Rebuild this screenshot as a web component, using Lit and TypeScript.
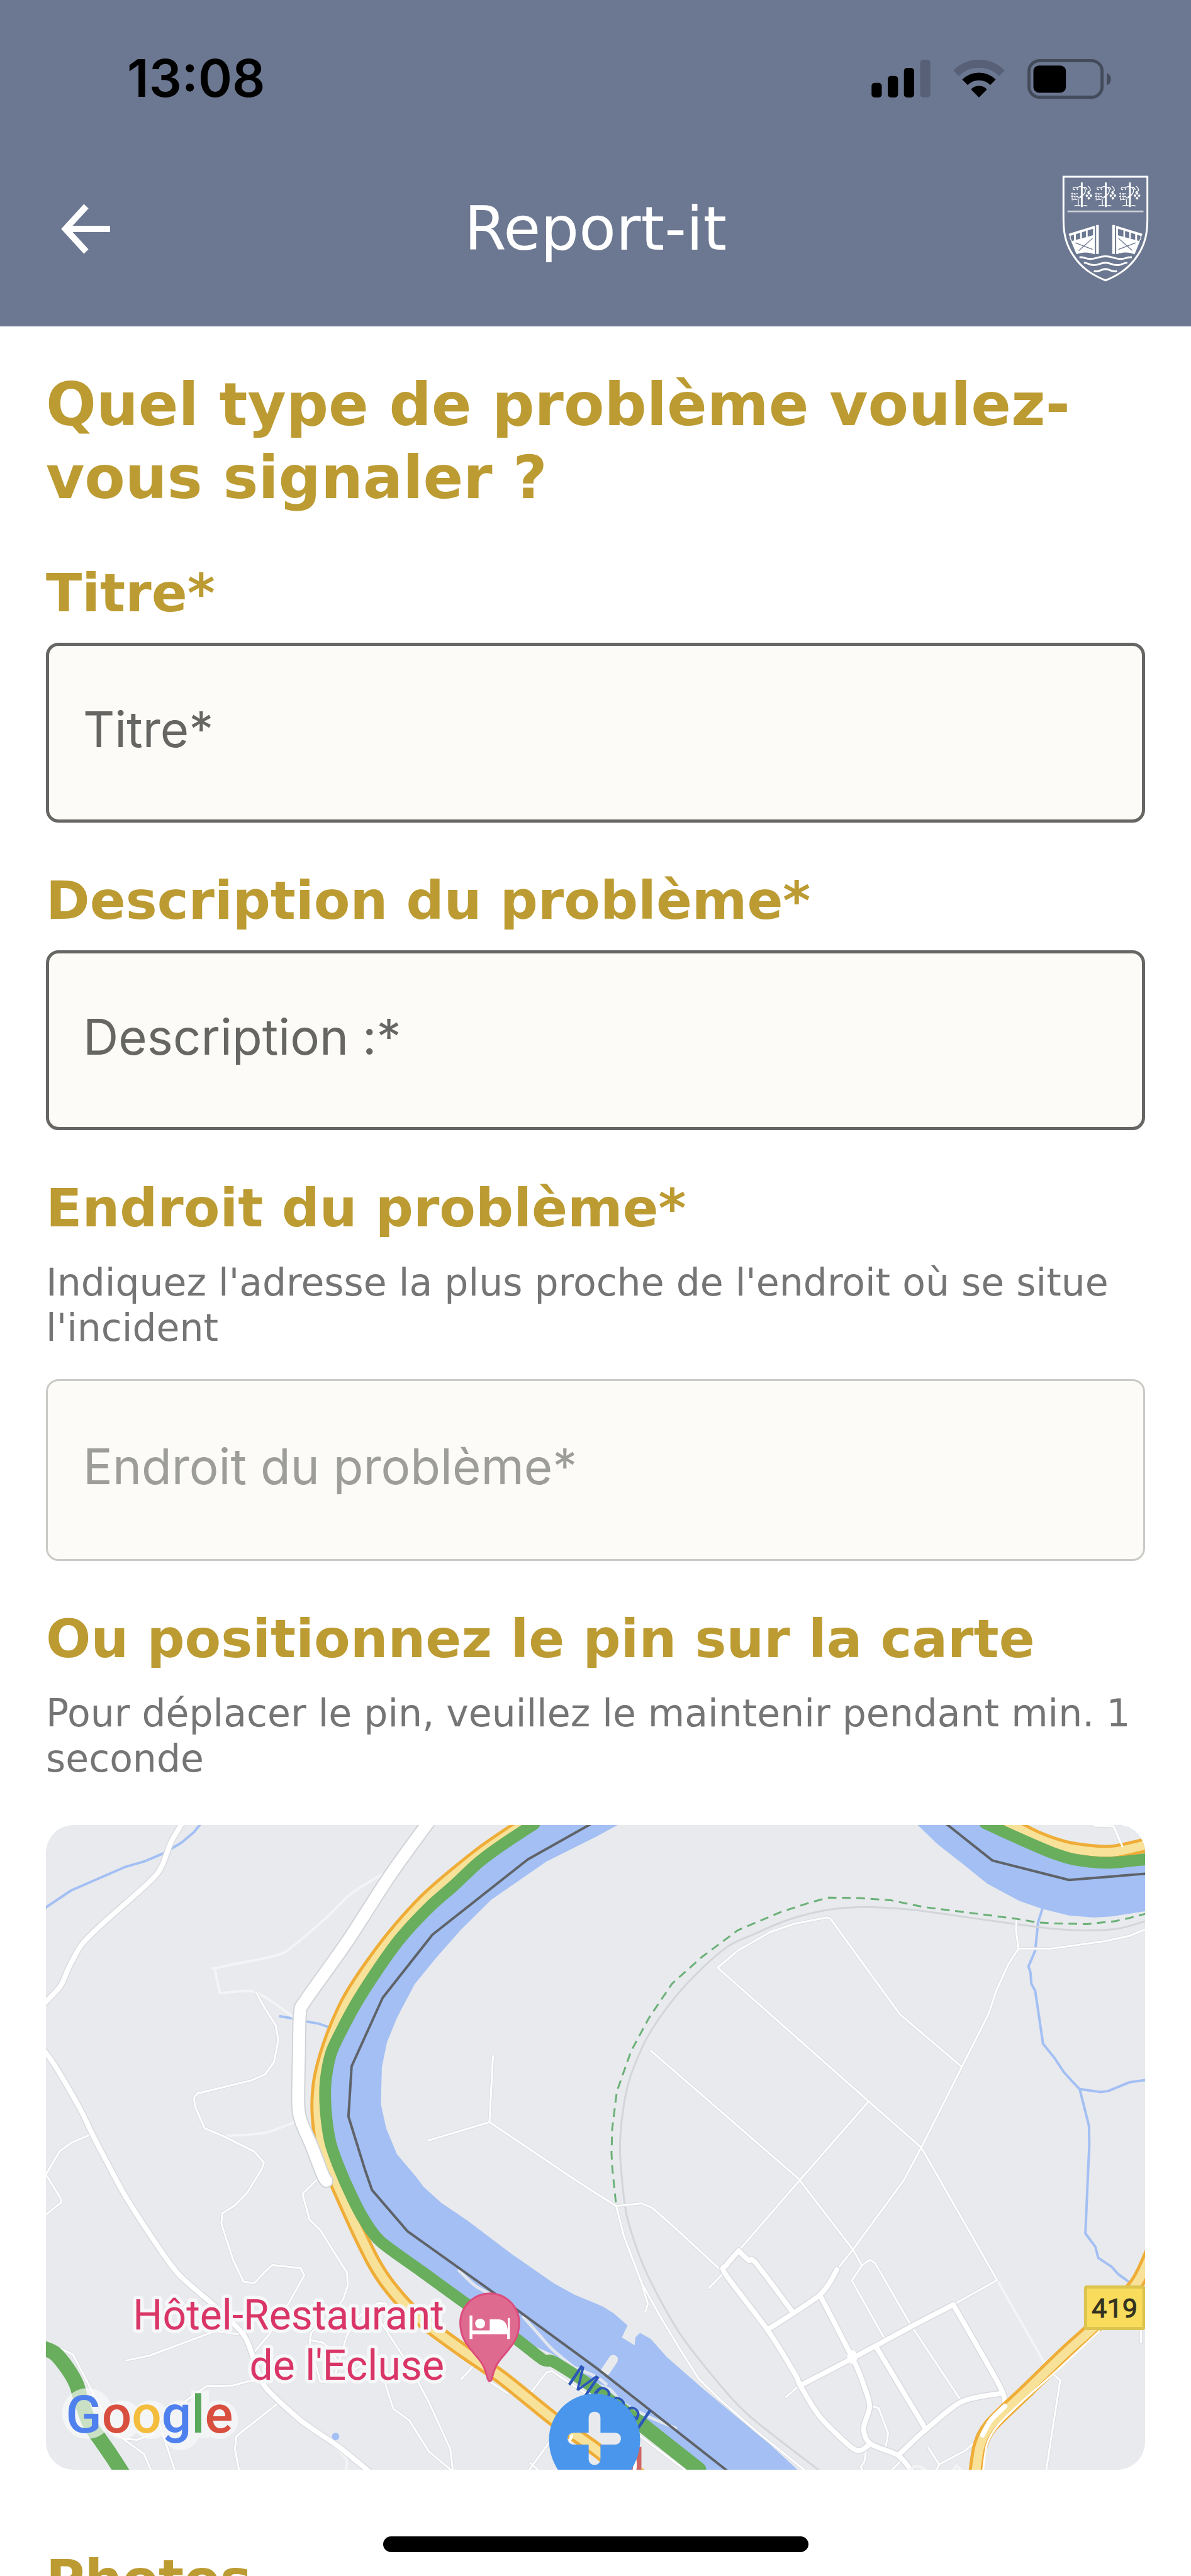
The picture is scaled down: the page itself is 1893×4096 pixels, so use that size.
import { LitElement, html, svg, css } from "lit";
import { customElement, property, state } from "lit/decorators.js";

/* ---------- map geometry ---------- */

// Survey sheets: origin x, origin y, x scale, y scale. Points in the way
// strings below are given in sheet units, after the letter of their sheet.
const SHEETS: Record<string, [number, number, number, number]> = {
  a: [60, 2920, 0.574, 0.3954],
  b: [960, 2920, 0.574, 0.3954],
  c: [60, 3500, 0.574, 0.4177],
  d: [960, 3500, 0.574, 0.4177],
};

type Point = [number, number];

function points(way: string): Point[] {
  let sheet = SHEETS.a;
  const out: Point[] = [];
  for (const token of way.trim().split(/\s+/)) {
    if (SHEETS[token]) {
      sheet = SHEETS[token];
      continue;
    }
    const [x, y] = token.split(",").map(Number);
    out.push([sheet[0] + x * sheet[2], sheet[1] + y * sheet[3]]);
  }
  return out;
}

const fmt = (n: number) => n.toFixed(1);

function straight(way: string): string {
  return "M" + points(way).map(([x, y]) => `${fmt(x)} ${fmt(y)}`).join("L");
}

function curved(way: string): string {
  const p = points(way);
  let d = `M${fmt(p[0][0])} ${fmt(p[0][1])}`;
  for (let i = 0; i < p.length - 1; i++) {
    const p0 = p[Math.max(0, i - 1)];
    const p1 = p[i];
    const p2 = p[i + 1];
    const p3 = p[Math.min(p.length - 1, i + 2)];
    const k = 7;
    d += `C${fmt(p1[0] + (p2[0] - p0[0]) / k)} ${fmt(p1[1] + (p2[1] - p0[1]) / k)} ${fmt(p2[0] - (p3[0] - p1[0]) / k)} ${fmt(p2[1] - (p3[1] - p1[1]) / k)} ${fmt(p2[0])} ${fmt(p2[1])}`;
  }
  return d;
}

const WATER = [
  "b 66,60 0,112 a 1430,212 1275,368 1190,490 1120,605 1060,712 1010,850 982,950 968,1050 965,1200 980,1300 1010,1405 1065,1500 c 1085,68 1135,130 1210,200 1330,325 1450,440 1510,485 1568,518 d 20,530 50,555 90,603 74,650 110,680 112,650 125,632 155,655 200,725 300,845 400,960 480,1050 575,1170 300,1170 150,985 0,840 c 1450,715 1340,650 1200,500 985,290 920,190 850,0 a 830,1350 810,1200 815,1050 840,950 900,780 1000,560 1120,370 1270,190 1400,60",
  "b 903,60 960,140 1030,220 1100,302 1190,372 1255,405 1330,432 1400,440 1450,436 1550,413 1550,60",
];
const INLAND = "b 1120,60 1200,115 1290,170 1350,195 1440,205 1550,190 1550,60";

const STREAMS = [
  "a 20,403 95,330 245,235 300,212 355,178 405,135 440,92 458,60",
  "a 682,843 722,853",
  "a 758,865 790,873 820,888",
  "b 1255,405 1243,460 1235,575 1216,640 1222,665 1224,710 1235,740 1257,955 1290,1015 1315,1070 1340,1110 1360,1140 1386,1290 1387,1370 1384,1460 d 1376,248 1404,300 1412,342 1450,377 1468,405 1500,437",
  "b 1360,1140 1418,1152 1440,1148 1500,1112 1550,1102",
];

const RAIL =
  "b 1550,453 1470,485 1380,493 1280,485 1120,455 1000,430 900,410 800,399 720,399 640,412 540,450 450,505 370,560 280,675 210,790 145,930 100,1080 80,1200 69,1350 71,1450 d 88,180 140,390 230,620 330,800 430,950 630,1165";
const TRAIL =
  "b 1550,423 1500,442 1460,455 1380,467 1290,464 1240,460 1180,445 1030,417 920,397 830,370 740,361 655,359 600,380 520,418 400,492 300,600 215,710 150,850 100,985 60,1150 47,1300 45,1400 47,1460 d 58,140";

const PATHS = [
  "a 970,262 880,345 820,430 720,555 670,595 505,645 500,655 512,740 520,748 615,745 722,850",
  "a 722,1275 650,1315 600,1325 520,1332",
  "c 830,1065 868,1120 866,1170",
  "d 1128,428 1268,765",
];

const LANES = [
  "a 155,1322 95,1360 62,1395 24,1490 c 24,20 65,110 66,130 20,180",
  "a 615,745 635,800 670,880 677,940 665,1030 640,1080 600,1105 450,1158 440,1175 443,1210 470,1300 520,1330 610,1395 637,1440 c 630,0 590,90 555,140 520,170 517,210 550,350 580,435 610,440 640,395 660,370 740,382 750,410 705,520 650,640 610,705",
  "c 790,35 745,95 765,195 795,235 870,400 872,450 860,500 830,560 770,630 765,665 795,820 830,825 870,640 910,560 960,515 980,520",
  "c 250,738 315,720 500,625 580,640",
  "c 60,690 100,715 170,900 230,1030 300,1100 322,1170",
  "c 680,900 560,1030 555,1080 568,1170",
  "c 965,590 1050,770 1100,900 1160,1080 1168,1170",
  "c 960,720 980,840 1000,925 1045,970 1100,1090 1165,1165",
  "c 640,815 590,820 550,835 475,838 340,970 388,1170",
  "c 765,660 800,668 820,690 850,760 890,775 930,740",
  "c 200,1010 240,1040 280,1045 330,1020",
  "c 1225,760 1190,812",
  "c 1380,875 1430,785 1445,780 1568,890",
  "c 1265,815 1320,865",
  "c 1440,1050 1380,1165",
  "c 1385,1135 1410,1165",
  "a 1280,1005 1270,1275 1098,1350",
  "a 1270,1275 1500,1500 c 1568,92 d 58,142 130,132 160,150 230,235 360,400 318,460",
  "b 343,645 400,575 490,500 560,465 650,440 660,445 855,835 1027,1047",
  "b 343,645 767,1190 915,1378 950,1467 d 1128,428 1005,523",
  "b 155,983 570,1505 d 723,310 748,372 720,430 810,650",
  "b 767,1190 575,1510 d 402,315",
  "b 1183,445 1181,490 1188,567 1160,630 1125,740 1105,830 915,1378 d 865,45 723,310 678,388",
  "b 1188,567 1280,567 1430,537 1500,515 1550,485",
  "b 1400,66 1455,68 1480,150",
  "d 748,372 770,350 785,362 885,600 1025,890",
  "d 58,142 80,260 130,440 180,565 235,690 290,810 350,890 450,1010 590,1165",
  "d 125,420 147,520 140,550",
  "d 570,838 535,880",
  "d 775,915 795,922 822,1020 815,1075",
  "d 760,1085 755,1130 745,1150 752,1165",
  "d 1085,1030 1040,1085 965,1140",
  "d 935,1075 965,1140 955,1170",
  "d 1285,790 1305,815 1265,1170",
  "d 1532,610 1532,670",
  "d 855,1130 830,1165",
  "d 125,1030 260,1170",
];

const STREETS = [
  "d 402,315 430,352 450,362 552,548",
  "d 402,315 368,370 365,405 483,620 560,790 575,835 630,955 715,1070 745,1085 772,1060",
  "d 483,620 630,485 678,388",
  "d 630,485 722,730 750,820 770,915 753,1000 772,1060 850,1105 890,1170",
  "d 575,835 722,730 890,605 1005,523",
  "d 1005,523 1138,845 1147,920",
  "d 790,690 928,1005",
  "d 1138,866 1028,898 928,1005 850,1105",
  "a 405,60 375,135 350,230 315,295 180,470 125,550 90,640 65,720 20,790",
  "a 20,985 50,1045 120,1220 155,1325 200,1450 c 250,110 340,300 400,410 500,530 580,640 610,740 640,840 740,970 840,1065 935,1170",
];

const AVENUE =
  "a 1097,55 990,270 870,540 755,775 738,830 735,1000 733,1200 742,1275 770,1370 802,1490 c 812,45";

const HIGHWAYS = [
  "a 1366,60 1245,180 1108,345 1020,480 940,630 875,775 834,905 808,1015 793,1110 788,1210 793,1310 805,1400 c 824,0 862,120 905,250 945,360 985,445 1045,540 1110,615 1200,705 1310,810 1450,965 1568,1080 d 80,1170",
  "b 1160,55 1240,115 1320,155 1400,172 1460,172 1550,143",
  "d 1560,330 1515,450 1400,610 1320,710 1215,850 1110,990 1080,1070 1068,1175",
];

const GREENWAYS = [
  "a 1396,58 1310,140 1240,215 1170,310 1100,400 1020,525 960,645 900,780 855,900 825,995 810,1110 810,1220 822,1350 845,1450 c 885,110 920,200 965,280 1080,395 1200,515 1340,650 1420,735 1445,740 1500,785 1568,850 d 140,990",
  "b 1094,55 1200,125 1290,180 1350,205 1440,217 1550,202",
];
const FAIRWAYS = [
  "a 1556,58 1378,203 1110,510 970,768 883,1047 874,1252 920,1467 c 940,80 1040,240 1285,480 1568,765 d 375,1170",
  "b 985,58 1115,208 1330,287 1550,261",
];

const BLUE = "#4f81ee";
const RED = "#d94f3f";
const AMBER = "#f4bd3d";
const LEAF = "#5aa85c";

@customElement("report-map")
export class ReportMap extends LitElement {
  static styles = css`
    :host {
      display: block;
      overflow: hidden;
      border-radius: 44px;
      background: #e8eaed;
    }
    .sheet {
      display: block;
      width: 100%;
      height: auto;
    }
    .line {
      fill: none;
      stroke-linecap: round;
      stroke-linejoin: round;
    }
    .water { fill: #a3bff4; }
    .land { fill: #e8eaed; }
    .stream { stroke: #a3bff4; stroke-width: 4px; }
    .rail { stroke: #d3d5d9; stroke-width: 3px; }
    .trail { stroke: #6ab077; stroke-width: 3px; stroke-dasharray: 14 9; stroke-linecap: butt; }
    .path { stroke: #f3f4f6; stroke-width: 4px; }
    .lane-edge { stroke: #dbdde1; stroke-width: 5px; }
    .lane { stroke: #ffffff; stroke-width: 3px; }
    .street-edge { stroke: #d8dadf; stroke-width: 11px; }
    .street { stroke: #ffffff; stroke-width: 8px; }
    .avenue-edge { stroke: #d0d3d7; stroke-width: 23px; }
    .avenue { stroke: #ffffff; stroke-width: 19px; }
    .highway-edge { stroke: #efad38; stroke-width: 24px; }
    .highway { stroke: #f8e299; stroke-width: 14px; }
    .greenway { stroke: #69ae5d; stroke-width: 19px; }
    .greenway-wide { stroke: #69ae5d; stroke-width: 24px; }
    .fairway { stroke: #5f6368; stroke-width: 4px; }
    .quay { stroke: #e2e6ee; stroke-width: 5px; }
    .pier { stroke: #e8eaed; stroke-width: 15px; }
    .label {
      font-family: Roboto, sans-serif;
      font-size: 67px;
      fill: #d93567;
      stroke: #f6f7f8;
      stroke-width: 11px;
      stroke-linejoin: round;
      paint-order: stroke;
      text-anchor: end;
    }
    .river-name {
      font-family: "Liberation Sans", sans-serif;
      font-size: 54px;
      fill: #2b57b8;
    }
    .road-number {
      font-family: Roboto, sans-serif;
      font-size: 44px;
      fill: #33331f;
      stroke: #33331f;
      text-anchor: middle;
    }
    .brand {
      font-family: Roboto, sans-serif;
      font-size: 85px;
      font-weight: 500;
    }
  `;

  private lines(ways: string[], cls: string, smooth = true) {
    return ways.map((w) => svg`<path class="line ${cls}" d=${smooth ? curved(w) : straight(w)}></path>`);
  }

  render() {
    return html`
      <svg class="sheet" viewBox="74 2945 1772 1040" role="group" aria-label="Carte">
        <defs>
          <mask id="plus">
            <rect x="870" y="3850" width="180" height="160" fill="#fff"></rect>
            <rect x="949" y="3891" width="19" height="86" rx="9" fill="#000"></rect>
            <rect x="915" y="3925" width="86" height="19" rx="9" fill="#000"></rect>
          </mask>
        </defs>
        ${WATER.map((w) => svg`<path class="water" d=${straight(w) + "Z"}></path>`)}
        <path class="land" d=${straight(INLAND) + "Z"}></path>
        ${this.lines(STREAMS, "stream", false)}
        ${this.lines(
          [
            "c 1185,392 1230,450 1285,490",
            "c 1365,570 1410,640 1450,700 1530,790 1568,830 d 40,850 75,900 140,950 225,1000",
            "c 1480,750 1568,800 d 30,830",
          ],
          "quay",
        )}
        ${this.lines(["d 28,780 50,735"], "pier")}
        ${this.lines([RAIL], "rail")}
        ${this.lines(PATHS, "path")}
        ${this.lines(LANES, "lane-edge", false)}
        ${this.lines(LANES, "lane", false)}
        ${this.lines([TRAIL], "trail", false)}
        ${this.lines(STREETS, "street-edge")}
        ${this.lines(STREETS, "street")}
        <ellipse cx="1374" cy="3803" rx="8" ry="11" fill="#fff"></ellipse>
        ${this.lines(HIGHWAYS, "highway-edge")}
        ${this.lines(HIGHWAYS, "highway")}
        ${this.lines(["d 1415,625 1290,785 1200,895 1130,990 1100,1060 1088,1170"], "lane")}
        ${this.lines(["d 1150,915 1110,970 1087,1026"], "street")}
        ${this.lines([AVENUE], "avenue-edge")}
        ${this.lines([AVENUE], "avenue")}
        ${this.lines(["b 1455,68 1480,150"], "lane")}
        ${this.lines(GREENWAYS, "greenway")}
        ${this.lines(["d 120,975 290,1160", "c 15,690 50,712 85,770 110,830 125,900 150,990 180,1050 210,1110 245,1185"], "greenway-wide")}
        ${this.lines(FAIRWAYS, "fairway", false)}
        <circle class="water" cx="541" cy="3931" r="6"></circle>
        <path class="line path" d="M1464 3986q14-14 28 0M1536 3986l6-8l8 8"></path>

        <rect x="1750" y="3690" width="94" height="67" rx="2" fill="#f9dc5c" stroke="#dcc44f" stroke-width="5"></rect>
        <text class="road-number" x="1797" y="3739">419</text>

        <text class="river-name" transform="translate(912 3844) rotate(34)">Mosel</text>

        <text class="label" x="716" y="3758">Hôtel-Restaurant</text>
        <text class="label" x="716" y="3840">de l'Ecluse</text>

        <path
          d="M789.500 3842C784 3842 787 3826 774 3809C758 3789 742 3776 742 3748A47.500 47.500 0 0 1 837 3748C837 3776 821 3789 805 3809C792 3826 795 3842 789.500 3842Z"
          fill="#de6a8f" stroke="#db4c7c" stroke-width="3"></path>
        <path d="M757 3736h4.500v24h28v-18h14q14 1 15 18v-20h3.500v34h-4.500v-8h-56v8h-4.500Z" fill="#fff"></path>
        <circle cx="774" cy="3749" r="8" fill="#fff"></circle>

        <path d="M1000 3948H1034V3990H1000Z" fill="#cf6563"></path>
        <path d="M1020 3960Q1026 3972 1022 3990" stroke="#fff" stroke-width="6" fill="none"></path>
        <path d="M1034 3981L1041 3986H1034Z" fill="#efad38"></path>
        <path
          d="M958.500 3862A74 74 0 0 1 1032 3936C1032 3958 1024 3976 1014 3990H903C893 3976 885 3958 885 3936A74 74 0 0 1 958.500 3862Z"
          fill="#4996ec" mask="url(#plus)"></path>
        <path d="M924 3927A9 9 0 0 0 919 3941L924 3932Z" fill="#fff"></path>

        <g fill="#fafafa" opacity="0.660">
          <circle cx="141" cy="3894" r="41"></circle>
          <circle cx="197" cy="3904" r="31"></circle>
          <circle cx="243" cy="3904" r="31"></circle>
          <rect x="260" y="3873" width="62" height="80" rx="31"></rect>
          <rect x="308" y="3857" width="29" height="77"></rect>
          <circle cx="353" cy="3904" r="31"></circle>
        </g>
        <text class="brand" x="106" y="3925"
          ><tspan fill=${BLUE}>G</tspan><tspan fill=${RED}>o</tspan><tspan fill=${AMBER}>o</tspan><tspan fill=${BLUE}>g</tspan><tspan fill=${LEAF}>l</tspan><tspan fill=${RED}>e</tspan></text>
      </svg>
    `;
  }
}

@customElement("town-crest")
export class TownCrest extends LitElement {
  static styles = css`
    :host { display: block; width: 138px; }
    .crest { display: block; width: 100%; }
    .ink { fill: none; stroke: #fff; stroke-width: 9px; }
    .fine { fill: none; stroke: #fff; stroke-width: 4px; }
    .cut { fill: none; stroke: #6c7891; stroke-width: 4px; }
    .solid { fill: #fff; }
  `;

  private vine(x: number) {
    return svg`<g transform="translate(${x} 0)">
      <path class="solid" d="M-4 74H5V193H-4Z"></path>
      <path class="fine" d="M-36 188q16-6 30-2M8 186q10-2 20 2M-16 186V158M-12 150C-2 146 18 130 18 112C18 98 -2 92 -10 94C-22 96 -26 104 -18 110M-22 102C-34 92 -42 98 -42 104q2 6 10 4M10 98q14-2 16 12M30 92q14 10 12 22q-8 2-16 8"></path>
      <path class="fine" d="M-51 128h32M-51 142h34M-44 156h30M-46 124v38M-32 126v34M-20 150l22-12" stroke-dasharray="9 3"></path>
      <path class="solid" d="M35 118l7 8l-7 8l-7-8ZM25 130l7 8l-7 8l-7-8ZM45 130l7 8l-7 8l-7-8ZM35 142l7 8l-7 8l-7-8Z"></path>
    </g>`;
  }

  private gate() {
    return svg`
      <path class="solid" d="M68 322L196 283V295L72 334ZM80 358L192 328V421C160 408 130 412 106 421Z"></path>
      <path class="solid" d="M94 322h9v34h-9ZM124 312h8v34h-8ZM152 302h8v36h-8ZM186 290h9v130h-9ZM201 280h13v140h-13Z"></path>
      <path class="fine" d="M76 332V346L84 356"></path>
      <path class="cut" d="M117 404L184 344M101 366L184 398"></path>`;
  }

  render() {
    return html`
      <svg class="crest" viewBox="36 40 420 516" aria-hidden="true">
        <path class="ink" d="M43 46H449V255C449 345 425 400 385 450C345 500 300 525 246 548C192 525 147 500 107 450C67 400 43 345 43 255Z"></path>
        <path d="M62 214H430" stroke="#c8cdd7" stroke-width="8"></path>
        ${[131, 247, 364].map((x) => this.vine(x))}
        ${this.gate()}
        <g transform="translate(493 0) scale(-1 1)">${this.gate()}</g>
        <path class="ink" d="M120 436C145 434 150 445 174 444C205 443 215 431 246 431C277 431 288 443 319 444C343 445 348 434 374 436"></path>
        <path class="ink" d="M142 462C165 464 165 474 190 474C215 474 222 462 246 462C270 462 277 474 302 474C327 474 327 464 352 462"></path>
        <path class="ink" d="M190 502C215 510 222 494 246 493C270 494 277 510 302 502"></path>
      </svg>
    `;
  }
}

@customElement("form-field")
export class FormField extends LitElement {
  @property() heading = "";
  @property() hint = "";
  @property() placeholder = "";
  @property({ type: Boolean }) muted = false;
  @state() private value = "";

  static styles = css`
    :host { display: block; }
    .field { display: flex; flex-direction: column; }
    .heading {
      font-size: 84px;
      line-height: 100px;
      font-weight: 700;
      color: #bc9b32;
    }
    .hint {
      margin: 32px 0 46px;
      font-size: 60px;
      line-height: 72px;
      color: #757575;
    }
    .box {
      box-sizing: border-box;
      width: 100%;
      height: 286px;
      margin-top: 29px;
      padding: 0 54px 12px;
      border: 5px solid #666664;
      border-radius: 20px;
      background: #fdfbf7;
      font: 400 78px/100px Inter, sans-serif;
      color: #333;
      outline: none;
    }
    .box::placeholder { color: #666664; opacity: 1; }
    .muted { height: 289px; margin-top: 0; padding: 0 56px 12px; border: 3px solid #c9cac6; }
    .muted::placeholder { color: #9d9d99; }
  `;

  render() {
    return html`
      <div class="field">
        <label class="heading" for="entry">${this.heading}</label>
        ${this.hint ? html`<p class="hint">${this.hint}</p>` : null}
        <input
          id="entry"
          class="box ${this.muted ? "muted" : ""}"
          type="text"
          .value=${this.value}
          placeholder=${this.placeholder}
          @input=${(e: Event) => (this.value = (e.target as HTMLInputElement).value)}
        />
      </div>
    `;
  }
}

@customElement("app-root")
export class AppRoot extends LitElement {
  static styles = css`
    :host {
      position: relative;
      display: flex;
      flex-direction: column;
      height: 100vh;
      overflow: hidden;
      background: #fff;
      font-family: "DejaVu Sans", sans-serif;
    }
    .top {
      flex: none;
      padding-bottom: 41px;
      background: #6c7891;
    }
    .status {
      display: flex;
      align-items: center;
      justify-content: space-between;
      height: 250px;
      padding: 0 127px 0 202px;
    }
    .clock {
      font-family: Inter, sans-serif;
      font-size: 82px;
      line-height: 100px;
      font-weight: 600;
      color: #000;
    }
    .indicators { display: flex; align-items: center; gap: 36px; }
    .signal { width: 94px; height: 60px; }
    .wifi { width: 82px; height: 60px; }
    .battery { width: 133px; height: 63px; }
    .nav {
      display: grid;
      grid-template-columns: 1fr auto 1fr;
      align-items: center;
      height: 228px;
      padding: 0 67px;
    }
    .back {
      justify-self: start;
      display: flex;
      padding: 0 28px;
      border: 0;
      background: none;
      cursor: pointer;
    }
    .arrow { width: 82px; height: 80px; }
    .title {
      margin: 0;
      font-size: 96px;
      line-height: 116px;
      font-weight: 400;
      color: #fff;
    }
    .crest { justify-self: end; }
    .page {
      flex: 1;
      min-height: 0;
      overflow-y: auto;
      scrollbar-width: none;
      padding: 67px 73px 0;
    }
    .question {
      margin: 0 0 75px;
      font-size: 94px;
      line-height: 116px;
      font-weight: 800;
      color: #bc9b32;
    }
    .fields { display: flex; flex-direction: column; gap: 74px; }
    .section {
      margin: 0;
      font-size: 84px;
      line-height: 100px;
      font-weight: 700;
      color: #bc9b32;
    }
    .hint {
      margin: 32px 0 70px;
      font-size: 60px;
      line-height: 72px;
      color: #757575;
    }
    .photos { margin-top: 124px; }
    .home {
      position: absolute;
      left: 50%;
      bottom: 38px;
      width: 676px;
      height: 25px;
      margin-left: -338px;
      border-radius: 13px;
      background: #000;
    }
  `;

  render() {
    return html`
      <header class="top">
        <div class="status">
          <span class="clock">13:08</span>
          <div class="indicators">
            <svg class="signal" viewBox="0 0 95 61" aria-hidden="true">
              <rect x="0" y="37.300" width="16.500" height="23.700" rx="5"></rect>
              <rect x="26.200" y="26.300" width="16.500" height="34.700" rx="5"></rect>
              <rect x="52.300" y="13.300" width="16.500" height="47.700" rx="5"></rect>
              <rect x="78.500" y="0" width="16.500" height="61" rx="5" fill="#576076"></rect>
            </svg>
            <svg class="wifi" viewBox="0 0 83 61" fill="none" aria-hidden="true">
              <path d="M4.400 21.900A52.500 52.500 0 0 1 78.600 21.900" stroke="#576076" stroke-width="13"></path>
              <path d="M18.900 36.400A32 32 0 0 1 64.100 36.400" stroke="#000" stroke-width="12.600"></path>
              <path d="M41.500 61L29.100 48.500Q29.100 46.600 31 45.600A17.500 17.500 0 0 1 52 45.600Q53.900 46.600 53.900 48.500Z" fill="#000"></path>
            </svg>
            <svg class="battery" viewBox="0 0 135 64" aria-hidden="true">
              <rect x="2.500" y="2.500" width="118" height="59" rx="17" fill="none" stroke="#434b5b" stroke-width="5"></rect>
              <rect x="9.600" y="10.300" width="52.500" height="44" rx="9"></rect>
              <path d="M128 22.700Q134.600 25 134.600 32.500T128 42.500Z" fill="#434b5b"></path>
            </svg>
          </div>
        </div>
        <nav class="nav">
          <button class="back" type="button" aria-label="Retour">
            <svg class="arrow" viewBox="0 0 82 80" fill="none" stroke="#fff" stroke-width="10" aria-hidden="true">
              <path d="M42 4L9 40L42 76M9 40H80"></path>
            </svg>
          </button>
          <h1 class="title">Report-it</h1>
          <town-crest class="crest"></town-crest>
        </nav>
      </header>

      <main class="page">
        <h2 class="question">Quel type de problème voulez-vous signaler ?</h2>
        <form class="fields">
          <form-field heading="Titre*" placeholder="Titre*"></form-field>
          <form-field heading="Description du problème*" placeholder="Description :*"></form-field>
          <form-field
            heading="Endroit du problème*"
            hint="Indiquez l'adresse la plus proche de l'endroit où se situe l'incident"
            placeholder="Endroit du problème*"
            muted
          ></form-field>
          <section>
            <h3 class="section">Ou positionnez le pin sur la carte</h3>
            <p class="hint">Pour déplacer le pin, veuillez le maintenir pendant min. 1 seconde</p>
            <report-map></report-map>
            <h3 class="section photos">Photos</h3>
          </section>
        </form>
      </main>
      <div class="home"></div>
    `;
  }
}
